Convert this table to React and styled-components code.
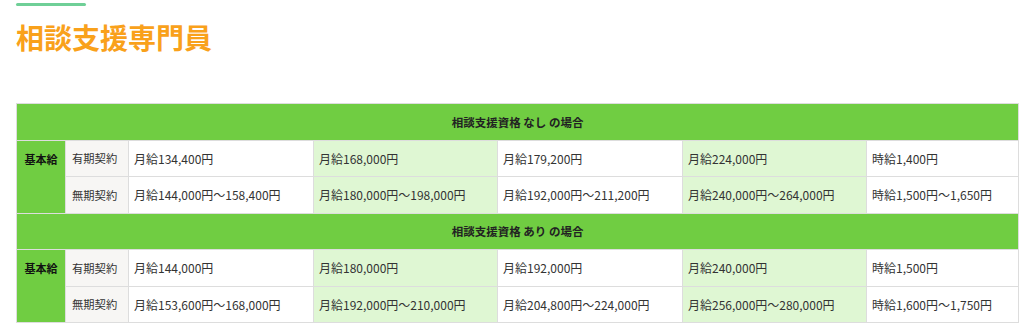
import React from 'react'
import styled, { createGlobalStyle } from 'styled-components'

const GlobalStyle = createGlobalStyle`
  body {
    margin: 0;
    background: #ffffff;
    font-family: "Noto Sans CJK JP", "Noto Sans", sans-serif;
    color: #333333;
  }
`

const Section = styled.section`
  padding: 3px 16px 0;
`

const Accent = styled.div`
  width: 70px;
  height: 3px;
  background: #6fcf97;
  border-radius: 2px;
`

const Title = styled.h2`
  margin: 12px 0 0;
  font-size: 28px;
  line-height: 39px;
  font-weight: 700;
  color: #f9a11b;
`

const Table = styled.table`
  margin-top: 46px;
  width: 1002px;
  border-collapse: collapse;
  table-layout: fixed;
  font-size: 12px;
`

const Row = styled.tr`
  height: 36.5px;
`

const Cell = styled.td`
  border: 1px solid #dddddd;
  padding: 0 5px;
  vertical-align: middle;
  background: ${p => (p.$tint ? '#dff7d3' : '#ffffff')};
  color: #333333;
  white-space: nowrap;
`

const HeadCell = styled.th`
  border: 1px solid #dddddd;
  background: #70cd42;
  color: #222222;
  font-size: 11.5px;
  font-weight: 700;
  text-align: center;
  vertical-align: middle;
`

const GroupCell = styled.th`
  border: 1px solid #dddddd;
  background: #70cd42;
  color: #111111;
  font-size: 11px;
  line-height: 16px;
  font-weight: 700;
  text-align: center;
  vertical-align: top;
  padding: 10px 0 0;
`

const LabelCell = styled.td`
  border: 1px solid #dddddd;
  background: #f7f6f4;
  color: #333333;
  font-size: 11.3px;
  padding: 0 6px;
  vertical-align: middle;
`

const widths = [49, 63, 185, 184, 185, 184, 152]

const blocks = [
  {
    title: '相談支援資格 なし の場合',
    rows: [
      ['有期契約', ['月給134,400円', '月給168,000円', '月給179,200円', '月給224,000円', '時給1,400円']],
      ['無期契約', ['月給144,000円～158,400円', '月給180,000円～198,000円', '月給192,000円～211,200円', '月給240,000円～264,000円', '時給1,500円～1,650円']],
    ],
  },
  {
    title: '相談支援資格 あり の場合',
    rows: [
      ['有期契約', ['月給144,000円', '月給180,000円', '月給192,000円', '月給240,000円', '時給1,500円']],
      ['無期契約', ['月給153,600円～168,000円', '月給192,000円～210,000円', '月給204,800円～224,000円', '月給256,000円～280,000円', '時給1,600円～1,750円']],
    ],
  },
]

export default function App() {
  return (
    <>
      <GlobalStyle />
      <Section>
        <Accent />
        <Title>相談支援専門員</Title>
        <Table>
          <colgroup>
            {widths.map((w, i) => (
              <col key={i} style={{ width: w }} />
            ))}
          </colgroup>
          <tbody>
            {blocks.map(block => (
              <React.Fragment key={block.title}>
                <Row>
                  <HeadCell colSpan={7}>{block.title}</HeadCell>
                </Row>
                {block.rows.map(([label, values], ri) => (
                  <Row key={label}>
                    {ri === 0 && <GroupCell rowSpan={2}>基本給</GroupCell>}
                    <LabelCell>{label}</LabelCell>
                    {values.map((v, i) => (
                      <Cell key={i} $tint={i % 2 === 1}>{v}</Cell>
                    ))}
                  </Row>
                ))}
              </React.Fragment>
            ))}
          </tbody>
        </Table>
      </Section>
    </>
  )
}
